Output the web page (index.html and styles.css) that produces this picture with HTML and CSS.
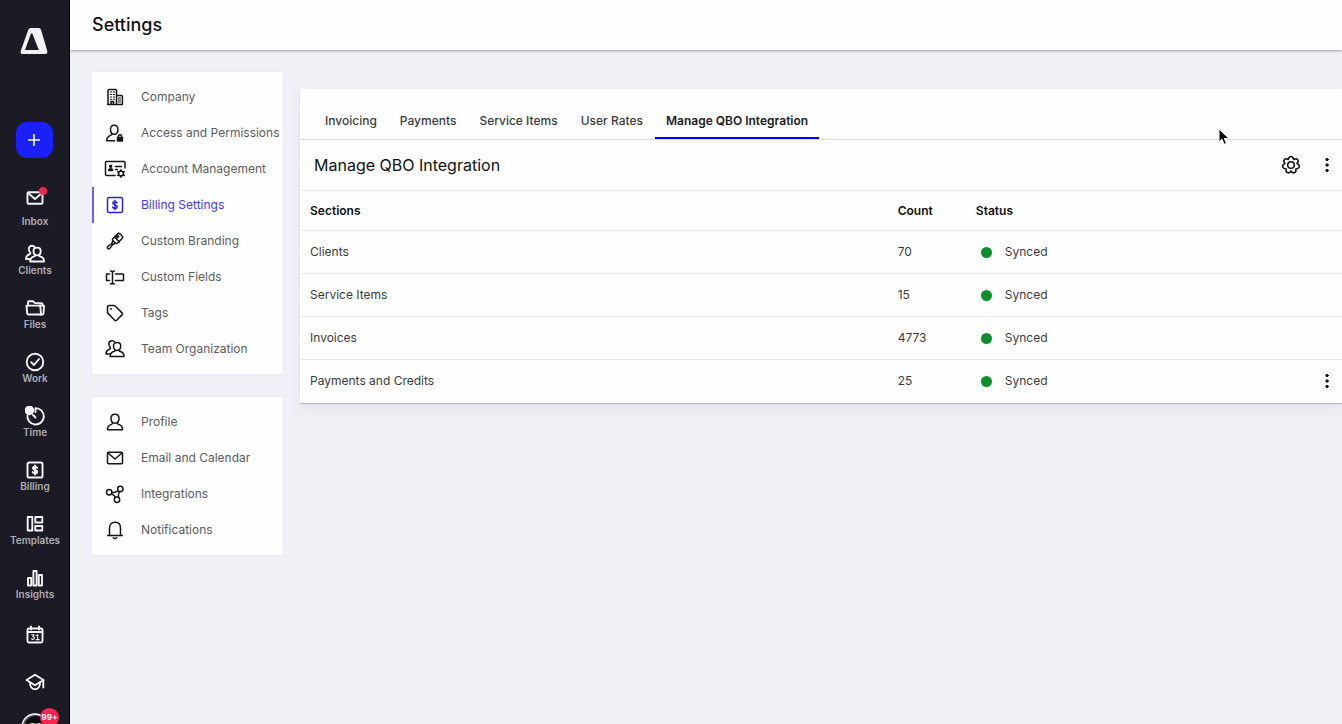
FILE: index.html
```html
<!DOCTYPE html>
<html lang="en">
<head>
<meta charset="utf-8">
<meta name="viewport" content="width=device-width, initial-scale=1">
<title>Settings</title>
<link rel="stylesheet" href="styles.css">
</head>
<body class="app">
<svg class="defs" aria-hidden="true">
  <symbol id="i-mail" viewBox="0 0 20 20"><rect x="2.500" y="4.200" width="15" height="11.600" rx="1"/><path d="M3 5l7 6 7-6"/></symbol>
  <symbol id="i-people" viewBox="0 0 20 20"><path d="M8.500 7c0-2 1.500-3.400 3.600-3.400S15.700 5 15.700 7c0 2.600-1.500 4.400-3.600 4.400S8.500 9.600 8.500 7z"/><path d="M9.800 11c.3.700.2 1-.3 1.300-2.700.7-4.500 2-4.300 5.200H19c.3-3.200-1.700-4.500-4.300-5.200-.6-.3-.6-.6-.3-1.300"/><path d="M9.700 3.200C9.100 2.200 8.100 1.700 7 1.700c-2 0-3.200 1.400-3.200 3.200 0 1.600.6 2.900 1.500 3.700.3.700.2 1.100-.4 1.400C2.500 10.900.9 12.300 1 15h3.500"/></symbol>
  <symbol id="i-folder" viewBox="0 0 20 20"><path d="M3 7.500V4.300c0-.6.400-1 1-1h4.200L10 5.100h6.500c.6 0 1 .4 1 1v1.400"/><path d="M1.500 7.600h12.800c.5 0 1 .4 1 .9l.8 8H3.300c-.6 0-1-.4-1.100-1z"/><path d="M14 7.500h4.300c.5 0 .8.300.7.800l-.5 7.200c-.1.700-.6 1-1.200 1h-2"/></symbol>
  <symbol id="i-check" viewBox="0 0 20 20"><circle cx="10" cy="10" r="8.300"/><path d="M6.200 10.200l2.800 2.800 5-6"/></symbol>
  <symbol id="i-time" viewBox="0 0 20 20"><path d="M10.500 6V2.100a8.200 8.200 0 1 1-8 7M10.500 11.500L8 9"/><circle class="solid" cx="4.400" cy="4.400" r="3.800"/></symbol>
  <symbol id="i-dollar" viewBox="0 0 20 20"><rect x="2.500" y="2.500" width="15" height="15" rx="1.600"/><path d="M12.200 7.900c-.3-.9-1.100-1.200-2.200-1.200-1.200 0-2.100.5-2.100 1.600 0 2.300 4.300 1.100 4.300 3.400 0 1.100-.9 1.600-2.200 1.600-1.200 0-2.100-.4-2.300-1.300M10 5.400v9.200"/></symbol>
  <symbol id="i-template" viewBox="0 0 20 20"><path d="M2.700 3h4.600v13.500H2.700zM10.300 3h7v5.500h-7zM10.300 12h7v4.500h-7z"/></symbol>
  <symbol id="i-bars" viewBox="0 0 20 20"><path d="M3 10h3.200v7.500H3zM8.400 3h3.200v14.500H8.400zM13.800 7H17v10.500h-3.200z"/></symbol>
  <symbol id="i-calendar" viewBox="0 0 20 20"><rect x="2.500" y="3.500" width="15" height="14" rx="1.500"/><path d="M2.500 7h15M6 1.500v3M14 1.500v3"/><path class="thin" d="M6.600 9.700h2.600l-1.400 1.900c1 0 1.600.5 1.600 1.400 0 1.400-1.800 1.800-2.900.9M11.300 10.600l1.400-1v5M11.200 14.600h3"/></symbol>
  <symbol id="i-cap" viewBox="0 0 20 20"><path d="M1.500 8L10 2.800 18.500 8 10 13.200z"/><path d="M5 10.500c-.2 3.800 1.700 6.800 5 6.800s5.200-3 5-6.800M18.300 8v7.500"/></symbol>
  <symbol id="i-company" viewBox="0 0 20 20"><path d="M3 17.500v-14c0-.6.400-1 1-1h6.500c.6 0 1 .4 1 1v14M11.500 8.500h5c.5 0 .9.400.9.900v8.100H2.600M6 17v-2.500h2.500V17"/><path class="thin" d="M5.300 5h1.200M8.300 5h1.200M5.300 7.500h1.200M8.300 7.500h1.200M5.300 10h1.200M8.300 10h1.200M5.300 12.300h1.200M8.300 12.300h1.200M13.300 11h2.200M13.300 13h2.200M13.300 15h2.200"/></symbol>
  <symbol id="i-access" viewBox="0 0 20 20"><path d="M5.500 6.200c0-2.400 1.500-4 3.700-4s3.700 1.600 3.700 4c0 3-1.600 5-3.700 5s-3.700-2-3.700-5z"/><path d="M6.700 10.600c.2 1-.1 1.400-1 1.800-2.300.9-4.200 2.300-4.100 5.400h8"/><path class="solid" d="M12.500 14.500h5v3.500h-5z"/><path d="M13.400 14v-1c0-1.800 3.200-1.800 3.200 0v1"/></symbol>
  <symbol id="i-account" viewBox="0 0 22 20"><path d="M11 16.500H2.500c-.6 0-1-.4-1-1v-12c0-.6.400-1 1-1h17.500c.6 0 1 .4 1 1V9"/><path d="M11.500 7.500h6M11.500 10.500h2"/><circle class="solid" cx="6.700" cy="7.300" r="1"/><path class="solid" d="M4.700 11.500c0-2.500 4-2.500 4 0z"/><circle cx="17" cy="14.500" r="2.500"/><path d="M17 10.700v1.300M17 17v1.300M13.700 12.600l1.100.6M19.200 15.800l1.100.6M13.700 16.400l1.100-.6M19.200 13.200l1.100-.6"/></symbol>
  <symbol id="i-brush" viewBox="0 0 20 20"><path d="M8 7.500L12.500 3c.8-.8 1.900-.7 2.600-.1l2.100 2.200c.7.700.7 1.700 0 2.400L12.600 12c-.8.800-1.600.8-2.300 0L8 9.800c-.7-.7-.7-1.600 0-2.300zM9.500 6l5 5M12 3.700l1.800 2M11 5l1.500 1.700"/><path d="M8.500 10.300c-1.200.2-1.700.9-1.400 2L2.800 15.500c-1.500 1.300.7 3.300 2 1.900l3.300-4.300c.9.200 1.700-.2 2-1.200"/></symbol>
  <symbol id="i-field" viewBox="0 0 20 20"><path d="M4.500 7H1.500v6.500h3M10.500 7h8v6.500h-8M5.500 4c1.300 0 2 .4 2 1.200 0-.8.700-1.200 2-1.200M7.500 5v11M5.500 17c1.300 0 2-.4 2-1.200 0 .8.700 1.200 2 1.200"/></symbol>
  <symbol id="i-tag" viewBox="0 0 20 20"><path d="M2.500 4v5.200c0 .5.200.9.500 1.200l6.700 6.800c.6.600 1.400.6 2 0l5.300-5.300c.6-.6.600-1.400 0-2L10.200 3c-.3-.3-.7-.5-1.200-.5H4C3.100 2.500 2.500 3.100 2.500 4z"/><circle class="solid" cx="6" cy="6" r=".3"/></symbol>
  <symbol id="i-person" viewBox="0 0 20 20"><path d="M6 6.300c0-2.500 1.600-4.100 4-4.100s4 1.600 4 4.100c0 3-1.700 4.900-4 4.900s-4-1.900-4-4.900z"/><path d="M7.500 10.700c.2 1-.1 1.400-1 1.700-2.400.9-4.400 2.300-4 5.400h15c.4-3.100-1.600-4.500-4-5.400-.9-.3-1.200-.7-1-1.700"/></symbol>
  <symbol id="i-nodes" viewBox="0 0 20 20"><circle cx="4.200" cy="8.200" r="2.700"/><circle cx="15.300" cy="5" r="2.700"/><circle cx="12" cy="15.800" r="2.700"/><path d="M6.900 8.300c1.500.8 4.600-.2 6-1.700M6.500 9.800c2 1 3.300 2 4 3.500M14.500 7.700c-1 1.600-1.400 3.400-1.100 5.600"/></symbol>
  <symbol id="i-bell" viewBox="0 0 20 20"><path d="M2.700 15.500h14.600M4.500 15V8c0-3.600 2.200-5.700 5.500-5.700s5.500 2.100 5.500 5.700v7M8.300 17.800c.9.800 2.500.8 3.400 0"/></symbol>
  <symbol id="i-gear" viewBox="0 0 20 20"><circle cx="10" cy="10" r="3.300"/><path d="M7.300 4.500C8 .5 12 .5 12.700 4.500 16.200 2.400 18.700 5.500 16 8.600 19.800 9.900 18.900 13.800 14.800 13.900 15.800 17.700 12.200 19.400 10 16 7.800 19.400 4.200 17.700 5.200 13.900 1.100 13.800.2 9.900 4 8.600 1.300 5.500 3.800 2.400 7.300 4.500z"/></symbol>
  <symbol id="i-dots" viewBox="0 0 6 16"><circle class="solid" cx="3" cy="2.500" r="1.200"/><circle class="solid" cx="3" cy="8" r="1.200"/><circle class="solid" cx="3" cy="13.500" r="1.200"/></symbol>
</svg>

<nav class="rail" aria-label="Main">
  <a class="logo" href="#" aria-label="Home"><svg viewBox="0 0 28 28"><path class="logo-shape" fill-rule="evenodd" d="M11 1h7.500c1.400 0 2.200.7 2.600 2l6.200 21c.5 1.700-.4 3-2.100 3H2.800C1 27 .1 25.700.7 24L8.200 3C8.700 1.700 9.500 1 11 1zM11 6.500L5 23h13.800L12.300 6.500z"/></svg></a>
  <button class="add" aria-label="Create"><svg viewBox="0 0 14 14"><path d="M7 1v12M1 7h12"/></svg></button>
  <a class="rail-item rail-inbox" href="#"><svg class="icon"><use href="#i-mail"/></svg><span>Inbox</span><i class="alert-dot"></i></a>
  <a class="rail-item" href="#"><svg class="icon"><use href="#i-people"/></svg><span>Clients</span></a>
  <a class="rail-item" href="#"><svg class="icon"><use href="#i-folder"/></svg><span>Files</span></a>
  <a class="rail-item" href="#"><svg class="icon"><use href="#i-check"/></svg><span>Work</span></a>
  <a class="rail-item" href="#"><svg class="icon"><use href="#i-time"/></svg><span>Time</span></a>
  <a class="rail-item" href="#"><svg class="icon"><use href="#i-dollar"/></svg><span>Billing</span></a>
  <a class="rail-item" href="#"><svg class="icon"><use href="#i-template"/></svg><span>Templates</span></a>
  <a class="rail-item" href="#"><svg class="icon"><use href="#i-bars"/></svg><span>Insights</span></a>
  <a class="rail-item rail-small" href="#" aria-label="Calendar"><svg class="icon"><use href="#i-calendar"/></svg></a>
  <a class="rail-item rail-small" href="#" aria-label="Learning"><svg class="icon"><use href="#i-cap"/></svg></a>
  <a class="avatar" href="#" aria-label="Account"><svg viewBox="0 0 28 28"><circle class="avatar-ring" cx="14" cy="14" r="13"/><path class="avatar-hair" d="M4 14C4 7 9 3 15 3s9 4 9 10l-4-3H9z"/><path class="avatar-face" d="M9 11c3-2 4 0 6 0s3-2 5 0v8H9z"/></svg><span class="badge">99+</span></a>
</nav>

<div class="page">
  <header class="topbar"><h1>Settings</h1></header>
  <div class="content">
    <aside class="menus">
      <nav class="menu" aria-label="Firm settings">
        <a href="#"><svg class="icon"><use href="#i-company"/></svg>Company</a>
        <a href="#"><svg class="icon"><use href="#i-access"/></svg>Access and Permissions</a>
        <a href="#"><svg class="icon icon-wide"><use href="#i-account"/></svg>Account Management</a>
        <a class="current" href="#" aria-current="page"><svg class="icon"><use href="#i-dollar"/></svg>Billing Settings</a>
        <a href="#"><svg class="icon"><use href="#i-brush"/></svg>Custom Branding</a>
        <a href="#"><svg class="icon"><use href="#i-field"/></svg>Custom Fields</a>
        <a href="#"><svg class="icon"><use href="#i-tag"/></svg>Tags</a>
        <a href="#"><svg class="icon"><use href="#i-people"/></svg>Team Organization</a>
      </nav>
      <nav class="menu" aria-label="Personal settings">
        <a href="#"><svg class="icon"><use href="#i-person"/></svg>Profile</a>
        <a href="#"><svg class="icon"><use href="#i-mail"/></svg>Email and Calendar</a>
        <a href="#"><svg class="icon"><use href="#i-nodes"/></svg>Integrations</a>
        <a href="#"><svg class="icon"><use href="#i-bell"/></svg>Notifications</a>
      </nav>
    </aside>
    <main class="card">
      <div class="tabs" role="tablist">
        <button role="tab">Invoicing</button>
        <button role="tab">Payments</button>
        <button role="tab">Service Items</button>
        <button role="tab">User Rates</button>
        <button role="tab" class="active" aria-selected="true">Manage QBO Integration</button>
      </div>
      <div class="card-head">
        <h2>Manage QBO Integration</h2>
        <button class="tool" aria-label="Integration settings"><svg class="icon"><use href="#i-gear"/></svg></button>
        <button class="tool" aria-label="More"><svg class="dots"><use href="#i-dots"/></svg></button>
      </div>
      <table class="sync">
        <colgroup><col class="c-section"><col class="c-count"><col><col class="c-more"></colgroup>
        <thead><tr><th>Sections</th><th>Count</th><th>Status</th><th></th></tr></thead>
        <tbody>
          <tr><td>Clients</td><td>70</td><td><span class="status">Synced</span></td><td></td></tr>
          <tr><td>Service Items</td><td>15</td><td><span class="status">Synced</span></td><td></td></tr>
          <tr><td>Invoices</td><td>4773</td><td><span class="status">Synced</span></td><td></td></tr>
          <tr><td>Payments and Credits</td><td>25</td><td><span class="status">Synced</span></td><td><button class="tool" aria-label="Row actions"><svg class="dots"><use href="#i-dots"/></svg></button></td></tr>
        </tbody>
      </table>
    </main>
  </div>
</div>
<svg class="pointer" viewBox="0 0 12 18" aria-hidden="true"><path d="M1 1v13l3-2.700 2.200 5 2.300-1-2.200-4.800H11z"/></svg>
</body>
</html>
```
FILE: styles.css
```css
* { box-sizing: border-box; }

.app {
  margin: 0;
  height: 100vh;
  overflow: hidden;
  display: flex;
  position: relative;
  background: #eff1f6;
  color: #111114;
  font-family: Inter, "Liberation Sans", sans-serif;
  font-size: 13px;
  line-height: 16px;
}

.defs { position: absolute; width: 0; height: 0; }
a { color: inherit; text-decoration: none; }
button { border: 0; padding: 0; margin: 0; background: none; font: inherit; color: inherit; }

.icon, .dots {
  width: 20px;
  height: 20px;
  flex: none;
  fill: none;
  stroke: currentColor;
  stroke-width: 1.5;
  stroke-linejoin: round;
  stroke-linecap: round;
}
.icon-wide { width: 22px; }
.dots { width: 6px; height: 16px; stroke-width: 1; }
.solid { fill: currentColor; }
.thin { stroke-width: 1.1; }

/* Left rail */
.rail {
  width: 70px;
  flex: none;
  height: 100vh;
  overflow: hidden;
  display: flex;
  flex-direction: column;
  align-items: center;
  padding-top: 27px;
  background: #1c1b25;
  box-shadow: inset -1px 0 #08080c;
  color: #f4f4f8;
}
.rail > * { flex: none; }
.logo { margin-right: 2px; }
.logo svg { display: block; width: 28px; height: 28px; }
.logo-shape { fill: #f1f1f6; }
.add {
  width: 37px;
  height: 36px;
  margin: 67px 2px 0 0;
  border-radius: 11px;
  background: #1a20fb;
  display: grid;
  place-items: center;
}
.add svg { width: 14px; height: 14px; fill: none; stroke: #fff; stroke-width: 1.6; }
.rail-item {
  position: relative;
  display: flex;
  flex-direction: column;
  align-items: center;
  margin-top: 22px;
  font-size: 10px;
  line-height: 12px;
  font-weight: 600;
}
.rail-item span { color: #aeadb5; }
.rail-item .icon { stroke-width: 1.9; }
.rail-inbox { margin-top: 30px; gap: 7px; }
.rail-inbox + .rail-item { margin-top: 17px; }
.alert-dot {
  position: absolute;
  top: -1px;
  right: 1px;
  width: 8px;
  height: 8px;
  border-radius: 50%;
  background: #f5264f;
}
.rail-small { margin-top: 25px; }
.rail-small + .rail-small { margin-top: 27px; }
.rail-item .thin { stroke-width: 1.2; }
.avatar { position: relative; margin-top: 21px; }
.avatar svg { display: block; width: 28px; height: 28px; }
.avatar-ring { fill: #55545c; stroke: #fff; stroke-width: 1.5; }
.avatar-hair { fill: #0c0c10; }
.avatar-face { fill: #e9e2cf; }
.badge {
  position: absolute;
  top: -5px;
  left: 19px;
  width: 19px;
  height: 19px;
  border-radius: 50%;
  background: #f5264f;
  color: #fff;
  font-size: 8px;
  line-height: 18px;
  font-weight: 700;
  text-align: center;
}

/* Page */
.page { flex: 1; min-width: 0; display: flex; flex-direction: column; }
.topbar {
  height: 50px;
  flex: none;
  display: flex;
  align-items: center;
  padding: 0 22px;
  background: #fefefe;
  box-shadow: 0 1px 3px rgba(0, 0, 0, .35);
}
.topbar h1 { margin: 0; font-size: 18px; line-height: 24px; font-weight: 500; }
.content { display: flex; align-items: flex-start; gap: 17px; padding: 22px 0 0 22px; }

.menus { width: 191px; flex: none; display: flex; flex-direction: column; gap: 23px; }
.menu { padding: 7px 0; background: #fefefe; box-shadow: 0 0 1px rgba(40, 40, 80, .15); }
.menu a {
  height: 36px;
  display: grid;
  grid-template-columns: 46px auto;
  justify-content: start;
  align-items: center;
  gap: 3px;
  color: #5b5b60;
  font-size: 12px;
  white-space: nowrap;
}
.menu .icon { color: #15151a; justify-self: center; }
.menu .current { color: #4038ea; box-shadow: inset 2px 0 #6a62ee; }
.menu .current .icon { color: #2a22e6; }

/* Card */
.card {
  flex: 1;
  min-width: 0;
  margin-top: 17px;
  background: #fefefe;
  box-shadow: 0 1px 1px rgba(0, 0, 0, .2), 0 6px 14px rgba(0, 0, 0, .05);
}
.tabs { display: flex; gap: 1px; padding: 14px 14px 0; border-bottom: 1px solid #dcdce4; }
.tabs button {
  height: 36px;
  padding: 2px 11px 0;
  border-bottom: 2px solid transparent;
  font-size: 12px;
  font-weight: 500;
  color: #3a3a3e;
  white-space: nowrap;
}
.tabs .active { border-color: #0000f0; font-weight: 600; color: #1a1a1e; }
.card-head { height: 50px; display: flex; align-items: center; gap: 23px; padding: 0 12px 0 14px; }
.card-head h2 { flex: 1; margin: 0; font-size: 16px; line-height: 20px; font-weight: 400; }
.tool { display: grid; place-items: center; }

.sync { width: 100%; table-layout: fixed; border-collapse: collapse; font-size: 12px; }
.c-section { width: 56.4%; }
.c-count { width: 7.5%; }
.c-more { width: 40px; }
.sync th, .sync td {
  padding: 0 0 0 10px;
  height: 43px;
  border-top: 1px solid #e8e8f0;
  text-align: left;
  font-weight: 400;
  color: #3a3a3e;
}
.sync th { height: 40px; font-weight: 600; color: #111114; }
.sync .tool { margin-left: 12px; color: #111114; }
.status { display: flex; align-items: center; gap: 13px; padding-left: 5px; }
.status::before { content: ""; width: 11px; height: 11px; border-radius: 50%; background: #0b8f2c; }

.pointer {
  position: absolute;
  top: 128px;
  left: 1218px;
  width: 12px;
  height: 18px;
  fill: #050505;
  stroke: #fff;
  stroke-width: 1;
}
```
